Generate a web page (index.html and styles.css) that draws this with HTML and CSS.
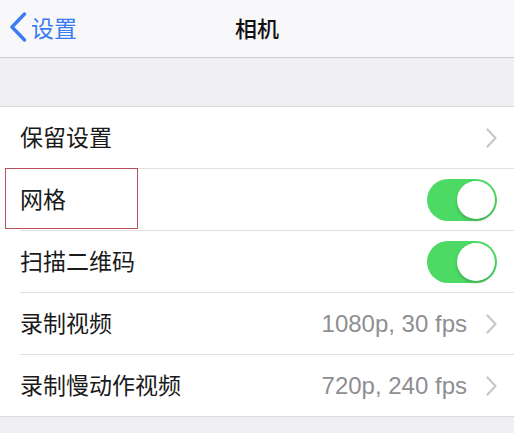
FILE: index.html
```html
<!DOCTYPE html>
<html lang="zh-CN">
<head>
<meta charset="utf-8">
<link rel="stylesheet" href="styles.css">
</head>
<body>
<div class="screen">
  <header class="nav">
    <div class="back">
      <svg class="back-icon" width="18" height="30" viewBox="0 0 18 30"><path d="M15.5 2 L3 15 L15.5 28" fill="none" stroke="#3a7cf2" stroke-width="3.4" stroke-linecap="round" stroke-linejoin="round"/></svg>
      <span class="back-text">设置</span>
    </div>
    <div class="title">相机</div>
  </header>
  <div class="gap"></div>
  <section class="group">
    <div class="row">
      <span class="label">保留设置</span>
      <span class="right"><svg class="chev" width="11" height="20" viewBox="0 0 11 20"><path d="M1.5 1.5 L9.5 10 L1.5 18.5" fill="none" stroke="#c7c7cc" stroke-width="2.2" stroke-linecap="round" stroke-linejoin="round"/></svg></span>
    </div>
    <div class="row highlighted">
      <span class="label">网格</span>
      <span class="right"><span class="toggle"><span class="knob"></span></span></span>
      <span class="mark"></span>
    </div>
    <div class="row">
      <span class="label">扫描二维码</span>
      <span class="right"><span class="toggle"><span class="knob"></span></span></span>
    </div>
    <div class="row">
      <span class="label">录制视频</span>
      <span class="right"><span class="value">1080p, 30 fps</span><svg class="chev" width="11" height="20" viewBox="0 0 11 20"><path d="M1.5 1.5 L9.5 10 L1.5 18.5" fill="none" stroke="#c7c7cc" stroke-width="2.2" stroke-linecap="round" stroke-linejoin="round"/></svg></span>
    </div>
    <div class="row">
      <span class="label">录制慢动作视频</span>
      <span class="right"><span class="value">720p, 240 fps</span><svg class="chev" width="11" height="20" viewBox="0 0 11 20"><path d="M1.5 1.5 L9.5 10 L1.5 18.5" fill="none" stroke="#c7c7cc" stroke-width="2.2" stroke-linecap="round" stroke-linejoin="round"/></svg></span>
    </div>
  </section>
  <div class="foot"></div>
</div>
</body>
</html>
```
FILE: styles.css
```css
html, body {
  margin: 0;
  padding: 0;
  background: #efeff4;
}
.screen {
  width: 514px;
  height: 433px;
  overflow: hidden;
  font-family: "Noto Sans CJK SC", "Noto Sans", sans-serif;
  background: #efeff4;
}
.nav {
  height: 57px;
  background: #f8f7fa;
  border-bottom: 1px solid #cfcfd3;
  display: flex;
  align-items: center;
  justify-content: center;
  position: relative;
}
.back {
  position: absolute;
  left: 9px;
  top: 12px;
  display: flex;
  align-items: center;
  gap: 4px;
}
.back-text {
  color: #3a7cf2;
  font-size: 23px;
  line-height: 30px;
}
.title {
  font-size: 22px;
  font-weight: 500;
  color: #111;
  margin-top: -4px;
}
.gap {
  height: 48px;
  border-bottom: 1px solid #dcdce0;
}
.group {
  background: #fff;
  border-bottom: 1px solid #dcdce0;
}
.row {
  height: 61px;
  margin-left: 20px;
  padding-right: 17px;
  display: flex;
  align-items: center;
  justify-content: space-between;
  border-bottom: 1px solid #e0e0e4;
  position: relative;
}
.row:last-child {
  border-bottom: none;
}
.label {
  font-size: 23px;
  color: #1a1a1a;
  margin-top: -4px;
}
.right {
  display: flex;
  align-items: center;
  gap: 19px;
}
.value {
  font-family: "Liberation Sans", Arial, sans-serif;
  font-size: 24px;
  color: #8e8e93;
}
.chev {
  display: block;
}
.toggle {
  width: 70px;
  height: 42px;
  border-radius: 21px;
  background: #4cd964;
  position: relative;
  display: block;
}
.knob {
  position: absolute;
  right: 2px;
  top: 2px;
  width: 38px;
  height: 38px;
  border-radius: 50%;
  background: #fff;
  box-shadow: 0 2px 3px rgba(0,0,0,0.2);
}
.mark {
  position: absolute;
  left: -15px;
  top: -1px;
  width: 131px;
  height: 59px;
  border: 1px solid #b8505e;
}
.foot {
  height: 20px;
}
```
